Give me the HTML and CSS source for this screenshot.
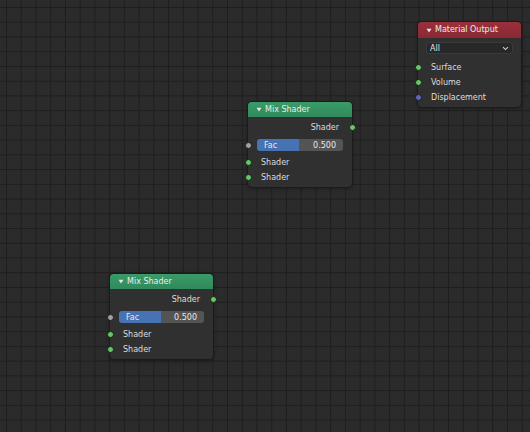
FILE: index.html
```html
<!DOCTYPE html>
<html>
<head>
<meta charset="utf-8">
<link rel="stylesheet" href="styles.css">
</head>
<body>
<div class="editor">
  <div class="node node-output pos-output">
    <div class="node-header">
      <svg class="tri" width="6" height="5" viewBox="0 0 6 5"><path d="M0.5 0.8 L5.5 0.8 L3 4.4 Z" fill="#e6e6e6"/></svg>
      <span class="title">Material Output</span>
    </div>
    <div class="node-body">
      <div class="dropdown"><span>All</span>
        <svg class="chev" width="7" height="5" viewBox="0 0 7 5"><path d="M1 1.2 L3.5 3.6 L6 1.2" fill="none" stroke="#d0d0d0" stroke-width="1.1"/></svg>
      </div>
      <div class="row"><i class="socket in green"></i><span>Surface</span></div>
      <div class="row"><i class="socket in green"></i><span>Volume</span></div>
      <div class="row"><i class="socket in purple"></i><span>Displacement</span></div>
    </div>
  </div>

  <div class="node node-mix pos-mix-a">
    <div class="node-header">
      <svg class="tri" width="6" height="5" viewBox="0 0 6 5"><path d="M0.5 0.8 L5.5 0.8 L3 4.4 Z" fill="#e6e6e6"/></svg>
      <span class="title">Mix Shader</span>
    </div>
    <div class="node-body">
      <div class="row out"><span>Shader</span><i class="socket outs green"></i></div>
      <div class="row field-row"><i class="socket in gray"></i>
        <div class="slider"><span>Fac</span><span>0.500</span></div>
      </div>
      <div class="row"><i class="socket in green"></i><span>Shader</span></div>
      <div class="row"><i class="socket in green"></i><span>Shader</span></div>
    </div>
  </div>

  <div class="node node-mix pos-mix-b">
    <div class="node-header">
      <svg class="tri" width="6" height="5" viewBox="0 0 6 5"><path d="M0.5 0.8 L5.5 0.8 L3 4.4 Z" fill="#e6e6e6"/></svg>
      <span class="title">Mix Shader</span>
    </div>
    <div class="node-body">
      <div class="row out"><span>Shader</span><i class="socket outs green"></i></div>
      <div class="row field-row"><i class="socket in gray"></i>
        <div class="slider"><span>Fac</span><span>0.500</span></div>
      </div>
      <div class="row"><i class="socket in green"></i><span>Shader</span></div>
      <div class="row"><i class="socket in green"></i><span>Shader</span></div>
    </div>
  </div>
</div>
</body>
</html>
```
FILE: styles.css
```css
html, body {
  margin: 0;
  padding: 0;
  background: #2a2a2a;
}
.editor {
  position: relative;
  width: 530px;
  height: 432px;
  overflow: hidden;
  background-color: #2b2b2b;
  background-image:
    linear-gradient(to right, #1e1e1e 1px, transparent 1px),
    linear-gradient(to bottom, #1e1e1e 1px, transparent 1px);
  background-size: 14.74px 14.74px;
  background-position: 6px 7px;
  font-family: "DejaVu Sans", "Liberation Sans", sans-serif;
  font-size: 8px;
  color: #dedede;
}
.node {
  position: absolute;
  background: #303030;
  border-radius: 4px;
  box-shadow: 0 0 0 1px #1b1b1b, 0 1px 4px rgba(0,0,0,0.45);
}
.pos-output { left: 418px; top: 22px; width: 103px; }
.pos-mix-a { left: 248px; top: 102px; width: 104px; }
.pos-mix-b { left: 110px; top: 274px; width: 103px; }

.node-header {
  display: flex;
  align-items: center;
  height: 15px;
  padding-left: 8px;
  gap: 3px;
  border-radius: 4px 4px 0 0;
  color: #ececec;
}
.node-output .node-header {
  height: 16px;
  background: linear-gradient(#9a303b, #882934);
}
.node-mix .node-header {
  background: linear-gradient(#3a9b68, #308a5b);
}
.tri { display: block; flex: none; }
.title { line-height: 1; }

.node-body {
  display: flex;
  flex-direction: column;
}
.node-mix .node-body { padding: 2px 0 2px; }
.node-output .node-body { padding: 4px 0 2px; }

.row {
  position: relative;
  display: flex;
  align-items: center;
  height: 15px;
  padding: 0 13px;
}
.row.out {
  justify-content: flex-end;
  height: 16px;
}
.row.field-row {
  height: 16px;
  margin: 2px 0 2px;
  padding: 0 9px;
}
.node-output .row { height: 15px; }

.socket {
  position: absolute;
  top: 50%;
  width: 5px;
  height: 5px;
  margin-top: -3.5px;
  border-radius: 50%;
  border: 1px solid #1e1e1e;
}
.socket.in { left: -3.5px; }
.socket.outs { right: -3.5px; }
.green { background: #63c763; }
.gray { background: #a1a1a1; }
.purple { background: #6363c7; }

.slider {
  flex: 1;
  display: flex;
  justify-content: space-between;
  align-items: center;
  height: 12px;
  padding: 0 7px;
  border-radius: 3px;
  background: linear-gradient(to right, #4772b3 49%, #545454 49%);
  color: #e8e8e8;
}

.dropdown {
  display: flex;
  justify-content: space-between;
  align-items: center;
  height: 12px;
  margin: 0 8px 6px;
  padding: 0 4px;
  border-radius: 3px;
  background: #282828;
  box-shadow: inset 0 0 0 1px #3a3a3a;
  color: #e0e0e0;
}
.chev { display: block; }
```
